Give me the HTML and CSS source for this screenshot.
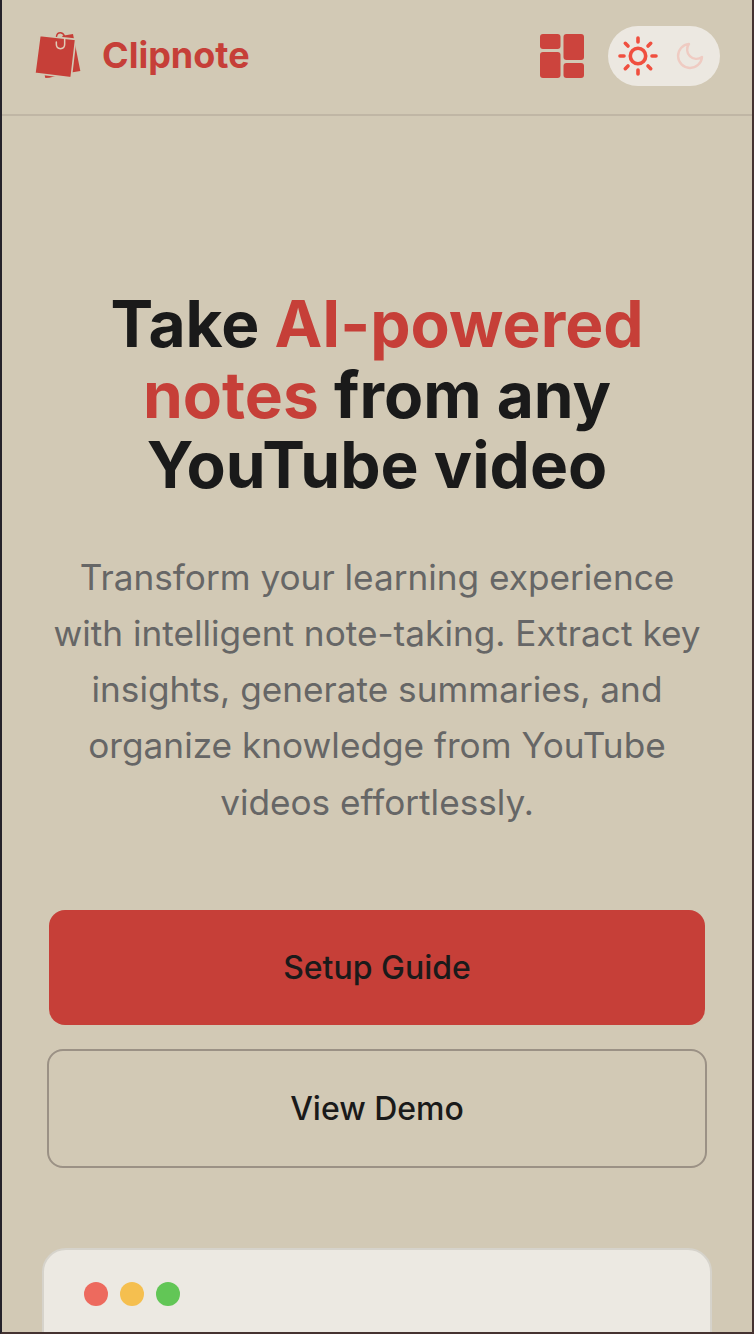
FILE: index.html
```html
<!DOCTYPE html>
<html lang="en">
<head>
<meta charset="utf-8">
<title>Clipnote</title>
<link rel="stylesheet" href="styles.css">
</head>
<body>
<div class="page">
  <header class="header">
    <a class="brand">
      <svg class="brand-icon" viewBox="42 30 144 150">
        <path class="solid" d="M128 47 159 42 181 153 140 160 88 173 76 174 74 166Z"/>
        <path class="sheet" d="M59.500 46 167 58 153.500 173.500 44.500 160Z"/>
        <path class="clip-back" d="M109.500 49Q111 38 121 38Q130 38 133 48"/>
        <path class="clip" d="M109 66V73Q109 86 121.500 86Q134 86 134 73V56"/>
      </svg>
      <span class="brand-name">Clipnote</span>
    </a>
    <div class="actions">
      <svg class="grid-icon" viewBox="0 0 44 44">
        <rect x="0" y="0" width="20.500" height="15" rx="3"/>
        <rect x="0" y="18" width="20.500" height="26" rx="3"/>
        <rect x="23.500" y="0" width="20.500" height="26" rx="3"/>
        <rect x="23.500" y="29" width="20.500" height="15" rx="3"/>
      </svg>
      <div class="theme-toggle">
        <svg class="sun" viewBox="0 0 40 40">
          <circle cx="20" cy="20" r="7.700"/>
          <path d="M20 2V6M20 34V38M2 20H6M34 20H38M7.300 7.300 10 10M30 30l2.700 2.700M7.300 32.700 10 30M30 10l2.700-2.700"/>
        </svg>
        <svg class="moon" viewBox="0 0 24 24"><path d="M21 12.790A9 9 0 1 1 11.210 3 7 7 0 0 0 21 12.790Z"/></svg>
      </div>
    </div>
  </header>
  <main class="hero">
    <h1 class="title">Take <span class="accent">AI-powered<br>notes</span> from any<br>YouTube video</h1>
    <p class="lead">Transform your learning experience<br>with intelligent note-taking. Extract key<br>insights, generate summaries, and<br>organize knowledge from YouTube<br>videos effortlessly.</p>
    <div class="buttons">
      <a class="button primary">Setup Guide</a>
      <a class="button secondary">View Demo</a>
    </div>
    <div class="window">
      <span class="dot red"></span><span class="dot yellow"></span><span class="dot green"></span>
    </div>
  </main>
</div>
</body>
</html>
```
FILE: styles.css
```css
* { box-sizing: border-box; }
body { margin: 0; font-family: Inter, "Liberation Sans", sans-serif; color: #1a1a1a; }
.page {
  height: 1334px;
  overflow: hidden;
  background: #d2c9b5;
  border: solid;
  border-width: 0 2px 2px;
  border-color: #453331 #453331 #453331 #25222a;
}
.header {
  height: 116px;
  padding: 0 32px 2px;
  border-bottom: 2px solid #c0b6a5;
  display: flex;
  align-items: center;
  justify-content: space-between;
}
.brand { display: flex; align-items: center; gap: 20px; margin-top: -2px; }
.brand-icon { width: 48px; height: 50px; }
.solid { fill: #c63f38; }
.sheet { fill: #c63f38; stroke: #d2c9b5; stroke-width: 5; }
.clip, .clip-back { fill: none; stroke-width: 4.500; stroke-linecap: round; }
.clip { stroke: #e0cbb7; }
.clip-back { stroke: #c63f38; }
.brand-name { font-size: 36px; font-weight: 700; color: #c63f38; }
.actions { display: flex; align-items: center; gap: 24px; }
.grid-icon { width: 44px; height: 44px; fill: #cc443d; }
.theme-toggle {
  width: 112px;
  height: 60px;
  padding: 0 14px 0 10px;
  border-radius: 30px;
  background: #ece8e1;
  display: flex;
  align-items: center;
  justify-content: space-between;
}
.sun { width: 40px; height: 40px; fill: none; stroke: #f04f3f; stroke-width: 3.600; stroke-linecap: round; }
.moon { width: 32px; height: 32px; fill: none; stroke: #efcbc2; stroke-width: 1.800; stroke-linejoin: round; }
.hero { padding: 173.300px 40px 0; text-align: center; }
.title { margin: 0; font-size: 64px; line-height: 70.400px; font-weight: 700; }
.accent { color: #c63f38; }
.lead { margin: 48px 0 0; font-size: 35.200px; line-height: 56.320px; color: #666; white-space: nowrap; }
.buttons { padding: 79.700px 5px 0; display: flex; flex-direction: column; gap: 24px; }
.button { border-radius: 16px; display: flex; align-items: center; justify-content: center; font-size: 32px; font-weight: 500; }
.primary { height: 115px; margin: 0 2px; background: #c63f38; }
.secondary { height: 119px; border: 2px solid #9b9185; }
.window {
  height: 200px;
  margin-top: 80px;
  padding: 32px 40px;
  border: 2px solid #d6d3cb;
  border-radius: 24px;
  background: #ece9e2;
  display: flex;
  gap: 12px;
}
.dot { width: 24px; height: 24px; border-radius: 50%; }
.red { background: #ed6a5e; }
.yellow { background: #f5bf4f; }
.green { background: #62c656; }
```
